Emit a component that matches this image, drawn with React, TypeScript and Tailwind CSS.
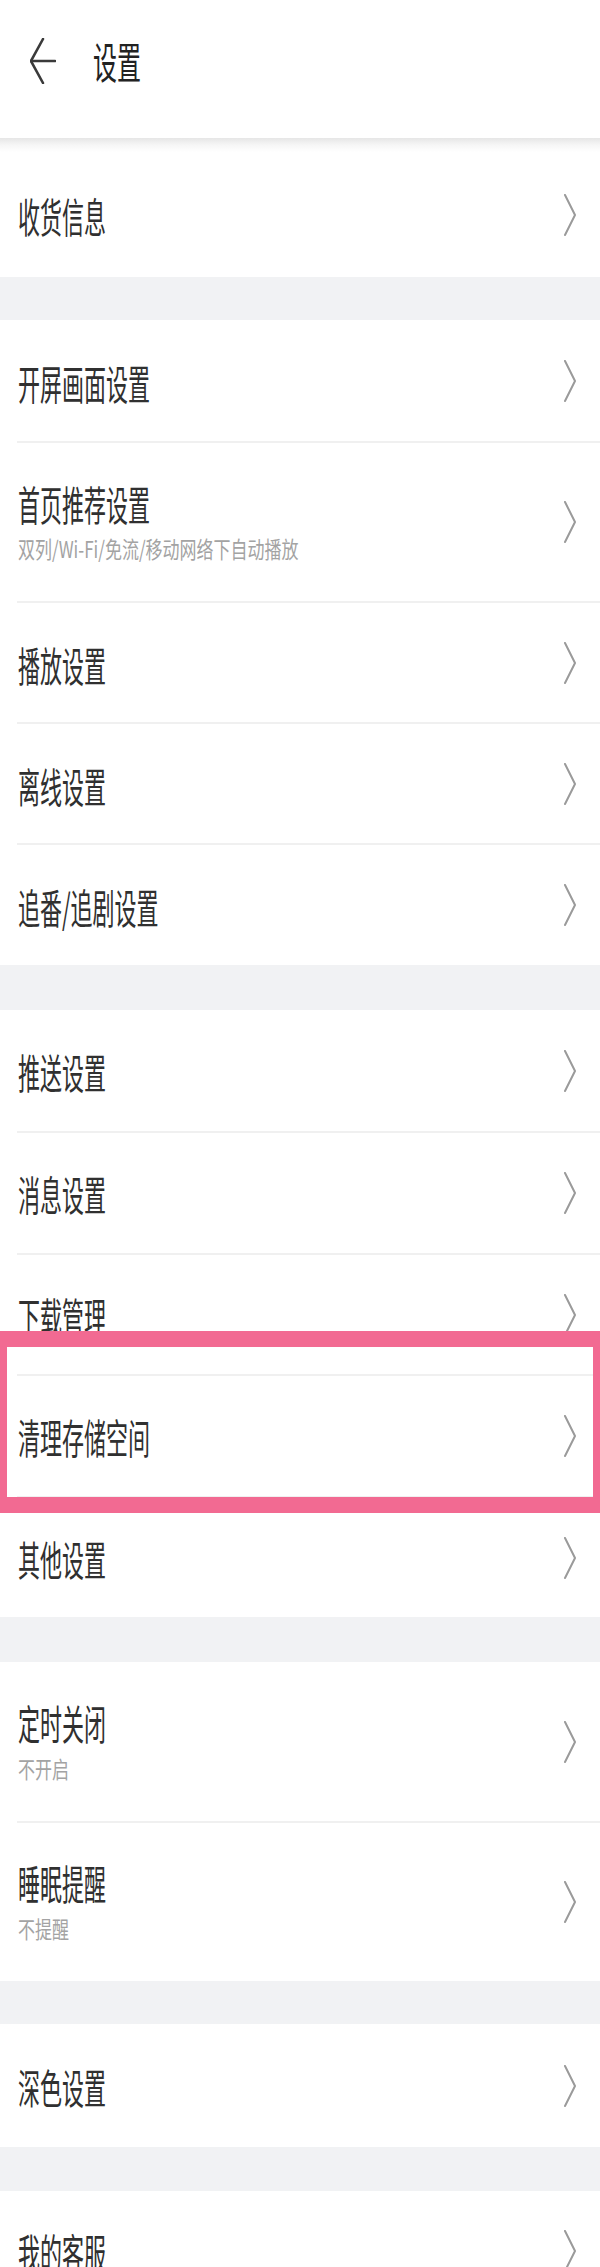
import React from "react";

function Chevron() {
  return (
    <svg width="14" height="42" viewBox="0 0 14 42" preserveAspectRatio="none" className="shrink-0">
      <polyline points="2,1 12,21 2,41" fill="none" stroke="#9a9a9a" strokeWidth="2" strokeLinejoin="round" strokeLinecap="round" />
    </svg>
  );
}

function Title({ children }: { children: React.ReactNode }) {
  return (
    <span className="inline-block text-[22px] leading-[26px] text-[#303030] scale-y-[1.85]">{children}</span>
  );
}

function Sub({ children }: { children: React.ReactNode }) {
  return (
    <span className="inline-block text-[17px] leading-[20px] text-[#a3a3a3] scale-y-[1.35]">{children}</span>
  );
}

function Row({ title, sub, h }: { title: string; sub?: string; h: string }) {
  return (
    <div className={`flex items-center justify-between pl-[18px] pr-[23px] bg-white ${h}`}>
      {sub ? (
        <div className="flex flex-col">
          <div className="h-[40px] flex items-center">
            <Title>{title}</Title>
          </div>
          <div className="h-[26px] mt-[14px] flex items-center">
            <Sub>{sub}</Sub>
          </div>
        </div>
      ) : (
        <Title>{title}</Title>
      )}
      <Chevron />
    </div>
  );
}

function Divider() {
  return (
    <div className="bg-white pl-[17px]">
      <div className="h-[2px] bg-[#f0f0f0]" />
    </div>
  );
}

function Gap({ h }: { h: string }) {
  return <div className={`bg-[#f1f2f4] ${h}`} />;
}

export default function App() {
  return (
    <div className="relative w-[600px] h-[2267px] overflow-hidden bg-white font-['Noto_Sans_CJK_SC','Noto_Sans',sans-serif]">
      {/* Header */}
      <div className="h-[138px] flex items-start pt-[38px] bg-white">
        <svg width="26" height="46" viewBox="0 0 26 46" preserveAspectRatio="none" className="ml-[30px] shrink-0">
          <polyline points="13,1 1,23 13,45" fill="none" stroke="#3a3a3a" strokeWidth="2.6" strokeLinejoin="round" strokeLinecap="round" />
          <line x1="1" y1="23" x2="25" y2="23" stroke="#3a3a3a" strokeWidth="2.6" strokeLinecap="round" />
        </svg>
        <div className="ml-[37px] h-[46px] flex items-center">
          <span className="inline-block text-[24px] leading-[28px] text-[#222] scale-y-[1.8]">设置</span>
        </div>
      </div>
      <div className="h-[14px] bg-gradient-to-b from-[#e6e6e6] via-[#f6f6f6] to-white" />

      <Row title="收货信息" h="h-[125px]" />
      <Gap h="h-[43px]" />

      <Row title="开屏画面设置" h="h-[121px]" />
      <Divider />
      <Row title="首页推荐设置" sub="双列/Wi-Fi/免流/移动网络下自动播放" h="h-[158px]" />
      <Divider />
      <Row title="播放设置" h="h-[119px]" />
      <Divider />
      <Row title="离线设置" h="h-[119px]" />
      <Divider />
      <Row title="追番/追剧设置" h="h-[120px]" />
      <Gap h="h-[45px]" />

      <Row title="推送设置" h="h-[121px]" />
      <Divider />
      <Row title="消息设置" h="h-[120px]" />
      <Divider />
      <Row title="下载管理" h="h-[119px]" />
      <Divider />
      <Row title="清理存储空间" h="h-[120px]" />
      <Divider />
      <Row title="其他设置" h="h-[119px]" />
      <Gap h="h-[45px]" />

      <Row title="定时关闭" sub="不开启" h="h-[159px]" />
      <Divider />
      <Row title="睡眠提醒" sub="不提醒" h="h-[158px]" />
      <Gap h="h-[43px]" />

      <Row title="深色设置" h="h-[123px]" />
      <Gap h="h-[44px]" />

      <Row title="我的客服" h="h-[120px]" />

      {/* highlight box */}
      <div className="absolute left-0 top-[1331px] w-[600px] h-[182px] border-x-[7px] border-y-[16px] border-[#f26a92] pointer-events-none" />
    </div>
  );
}
